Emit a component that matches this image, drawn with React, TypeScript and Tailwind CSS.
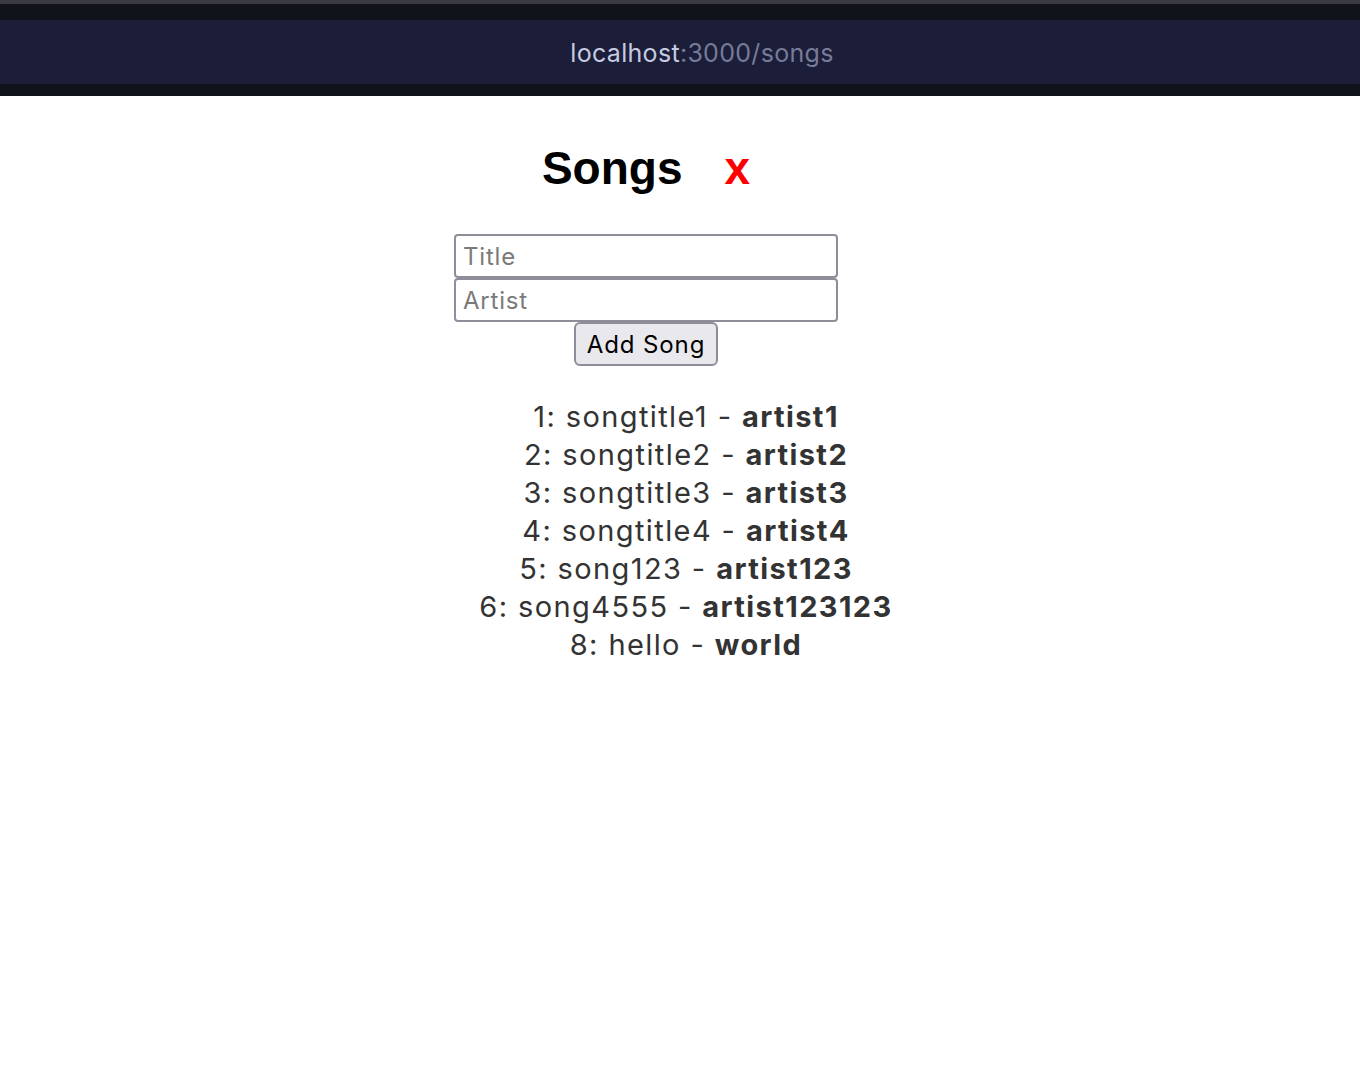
const SONGS = [
  { id: 1, title: "songtitle1", artist: "artist1" },
  { id: 2, title: "songtitle2", artist: "artist2" },
  { id: 3, title: "songtitle3", artist: "artist3" },
  { id: 4, title: "songtitle4", artist: "artist4" },
  { id: 5, title: "song123", artist: "artist123" },
  { id: 6, title: "song4555", artist: "artist123123" },
  { id: 8, title: "hello", artist: "world" },
];

export default function App() {
  return (
    <div className="min-h-[1086px] bg-white font-['Inter',sans-serif]">
      {/* browser bar */}
      <div className="h-[4px] bg-[#3a3b40]" />
      <div className="h-[16px] bg-[#11131b]" />
      <div className="flex h-[64px] items-center justify-center bg-[#1c1d38] pl-[44px] pt-[4px] text-[25px] tracking-[0.3px]">
        <span className="text-[#c5cbe0]">localhost</span>
        <span className="text-[#767b98]">:3000/songs</span>
      </div>
      <div className="h-[12px] bg-[#11131b]" />

      <div className="flex flex-col items-center">
        <div className="mr-[68px] mt-[44px] flex items-baseline font-['Liberation_Sans',Arial,sans-serif] text-[46px] font-bold leading-[56px]">
          <h1 className="text-black">Songs</h1>
          <button className="ml-[42px] text-[#ff0000]">x</button>
        </div>

        <div className="mr-[68px] mt-[38px] flex flex-col items-center">
          <input
            placeholder="Title"
            className="h-[44px] w-[384px] rounded-[4px] border-2 border-[#8e8d9a] px-[7px] text-[24px] tracking-[0.8px] placeholder:text-[#7a7a7a]"
          />
          <input
            placeholder="Artist"
            className="h-[44px] w-[384px] rounded-[4px] border-2 border-[#8e8d9a] px-[7px] text-[24px] tracking-[0.8px] placeholder:text-[#7a7a7a]"
          />
          <button className="h-[44px] w-[144px] rounded-[6px] border-2 border-[#8e8d9a] bg-[#e9e9ed] pt-[2px] text-[24px] tracking-[0.9px] text-black">
            Add Song
          </button>
        </div>

        <ul className="ml-[12px] mt-[32px] flex flex-col items-center text-[29px] leading-[38px] tracking-[1.4px] text-[#333333]">
          {SONGS.map((s) => (
            <li key={s.id}>
              {s.id}: {s.title} - <b className="font-bold">{s.artist}</b>
            </li>
          ))}
        </ul>
      </div>
    </div>
  );
}
